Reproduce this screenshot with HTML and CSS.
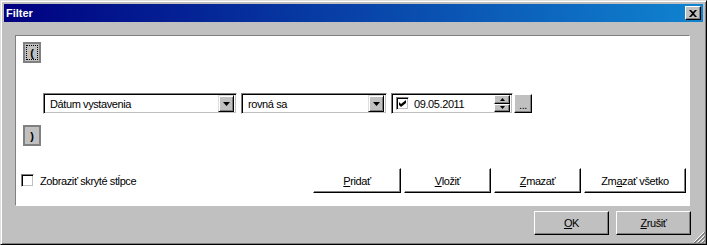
FILE: index.html
```html
<!DOCTYPE html>
<html lang="sk">
<head>
  <meta charset="UTF-8">
  <title>Filter</title>
  <link rel="stylesheet" href="styles.css">
</head>
<body>
  <div class="window">
    <div class="titlebar">
      <span class="title">Filter</span>
      <button class="close">
        <svg width="8" height="7" viewBox="0 0 8 7"><path d="M0 0h2l2 2 2-2h2L5 3.5 8 7H6L4 5 2 7H0l3-3.5z" fill="#000"/></svg>
      </button>
    </div>

    <div class="panel">
      <div class="paren focused"><span class="focus-ring">(</span></div>

      <div class="condition">
        <div class="combo field-name">
          <span class="combo-text">Dátum vystavenia</span>
          <span class="drop"><svg width="7" height="4" viewBox="0 0 7 4"><path d="M0 0h7L3.5 4z" fill="#000"/></svg></span>
        </div>
        <div class="combo field-op">
          <span class="combo-text">rovná sa</span>
          <span class="drop"><svg width="7" height="4" viewBox="0 0 7 4"><path d="M0 0h7L3.5 4z" fill="#000"/></svg></span>
        </div>
        <div class="combo field-date">
          <span class="mini-check">
            <svg width="7" height="7" viewBox="0 0 7 7"><path d="M0 2l2 2 5-4v3L2 7 0 5z" fill="#000"/></svg>
          </span>
          <span class="combo-text">09.05.2011</span>
          <span class="spin">
            <span class="spin-btn"><svg width="5" height="3" viewBox="0 0 5 3"><path d="M2.5 0L5 3H0z" fill="#000"/></svg></span>
            <span class="spin-btn"><svg width="5" height="3" viewBox="0 0 5 3"><path d="M0 0h5L2.5 3z" fill="#000"/></svg></span>
          </span>
        </div>
        <button class="dots">...</button>
      </div>

      <div class="paren">)</div>

      <div class="actions">
        <label class="check-label"><span class="check"></span>Zobraziť skryté stĺpce</label>
        <div class="action-buttons">
          <button class="flat-btn w-88"><u>P</u>ridať</button>
          <button class="flat-btn w-87"><u>V</u>ložiť</button>
          <button class="flat-btn w-87"><u>Z</u>mazať</button>
          <button class="flat-btn w-102">Zm<u>a</u>zať všetko</button>
        </div>
      </div>
    </div>

    <div class="footer">
      <button class="btn"><u>O</u>K</button>
      <button class="btn"><u>Z</u>rušiť</button>
    </div>

    <svg class="grip" width="12" height="12" viewBox="0 0 12 12">
      <path d="M11 1L1 11M11 5L5 11M11 9L9 11" stroke="#fff" stroke-width="1"/>
      <path d="M12 1L1 12M12 2L2 12M12 5L5 12M12 6L6 12M12 9L9 12M12 10L10 12" stroke="#808080" stroke-width="1"/>
    </svg>
  </div>
</body>
</html>
```

FILE: styles.css
```css
body {
  margin: 0;
  font-family: "Liberation Sans", Arial, sans-serif;
  font-size: 11px;
  letter-spacing: -0.4px;
  color: #000;
}

button {
  font-family: inherit;
  font-size: inherit;
  letter-spacing: inherit;
  color: #000;
  padding: 0;
  margin: 0;
}

.window {
  position: relative;
  width: 707px;
  height: 245px;
  box-sizing: border-box;
  background: #c0c0c0;
  border: 1px solid;
  border-color: #dfdfdf #000 #000 #dfdfdf;
  box-shadow: inset 1px 1px #fff, inset -1px -1px #808080;
  padding: 3px;
  display: flex;
  flex-direction: column;
}

.titlebar {
  height: 18px;
  display: flex;
  align-items: center;
  justify-content: space-between;
  padding: 0 2px 0 2px;
  background: linear-gradient(to right, #000080, #1084d0);
}

.title {
  color: #fff;
  font-weight: bold;
  letter-spacing: 0;
}

.close {
  width: 16px;
  height: 14px;
  display: flex;
  align-items: center;
  justify-content: center;
  background: #c0c0c0;
  border: 1px solid;
  border-color: #fff #000 #000 #fff;
  box-shadow: inset -1px -1px #808080;
}

/* bila plocha s podmienkami */
.panel {
  margin: 13px 13px 0 11px;
  height: 171px;
  box-sizing: border-box;
  background: #fff;
  border: 1px solid;
  border-color: #808080 #fff #fff #808080;
  padding: 6px 3px 0 7px;
  display: flex;
  flex-direction: column;
  align-items: flex-start;
}

.paren {
  width: 18px;
  height: 21px;
  box-sizing: border-box;
  background: #c0c0c0;
  border: 2px solid #808080;
  display: flex;
  align-items: center;
  justify-content: center;
  font-weight: bold;
}

.focused {
  padding: 1px;
}

.focus-ring {
  flex: 1;
  align-self: stretch;
  display: flex;
  align-items: center;
  justify-content: center;
  border: 1px dotted #000;
}

.condition {
  display: flex;
  margin: 30px 0 0 20px;
}

.combo {
  height: 21px;
  box-sizing: border-box;
  display: flex;
  align-items: center;
  background: #fff;
  border: 1px solid;
  border-color: #808080 #fff #fff #808080;
  box-shadow: inset 1px 1px #000, inset -1px -1px #c0c0c0;
  padding: 2px;
  margin-right: 4px;
}

.combo-text {
  flex: 1;
  padding-left: 4px;
}

.field-name {
  width: 194px;
}

.field-op {
  width: 146px;
}

.field-date {
  width: 122px;
  margin-right: 0;
}

.drop {
  width: 16px;
  height: 17px;
  box-sizing: border-box;
  display: flex;
  align-items: center;
  justify-content: center;
  background: #c0c0c0;
  border: 1px solid;
  border-color: #dfdfdf #000 #000 #dfdfdf;
  box-shadow: inset 1px 1px #fff, inset -1px -1px #808080;
}

.mini-check {
  width: 13px;
  height: 13px;
  box-sizing: border-box;
  margin-left: 2px;
  display: flex;
  align-items: center;
  justify-content: center;
  border: 1px solid;
  border-color: #808080 #fff #fff #808080;
  box-shadow: inset 1px 1px #000, inset -1px -1px #c0c0c0;
}

.field-date .combo-text {
  padding-left: 5px;
}

.spin {
  width: 16px;
  height: 17px;
  display: flex;
  flex-direction: column;
}

.spin-btn {
  flex: 1;
  display: flex;
  align-items: center;
  justify-content: center;
  background: #c0c0c0;
  border: 1px solid;
  border-color: #fff #000 #000 #fff;
  box-shadow: inset -1px -1px #808080;
}

.dots {
  width: 18px;
  height: 19px;
  margin: 1px 0 0 1px;
  background: #c0c0c0;
  border: 1px solid;
  border-color: #fff #000 #000 #fff;
  box-shadow: inset -1px -1px #808080;
  line-height: 20px;
}

.paren + .actions,
.actions {
  align-self: stretch;
  display: flex;
  align-items: center;
  margin-top: 22px;
  height: 25px;
}

.condition + .paren {
  margin-top: 11px;
}

.check-label {
  display: flex;
  align-items: center;
  margin-left: -2px;
}

.check {
  width: 13px;
  height: 13px;
  box-sizing: border-box;
  margin-right: 6px;
  border: 1px solid;
  border-color: #808080 #fff #fff #808080;
  box-shadow: inset 1px 1px #000, inset -1px -1px #c0c0c0;
}

.action-buttons {
  margin-left: auto;
  display: flex;
  gap: 3px;
}

.flat-btn {
  height: 25px;
  background: #fff;
  border: 1px solid;
  border-color: #fff #000 #000 #fff;
  box-shadow: inset -1px -1px #808080;
}

.w-88 { width: 88px; }
.w-87 { width: 87px; }
.w-102 { width: 102px; }

.footer {
  display: flex;
  justify-content: flex-end;
  gap: 7px;
  margin-top: 5px;
  padding-right: 12px;
}

.btn {
  width: 75px;
  height: 24px;
  background: #c0c0c0;
  border: 1px solid;
  border-color: #fff #000 #000 #fff;
  box-shadow: inset -1px -1px #808080;
}

.grip {
  position: absolute;
  right: 1px;
  bottom: 1px;
}
```
